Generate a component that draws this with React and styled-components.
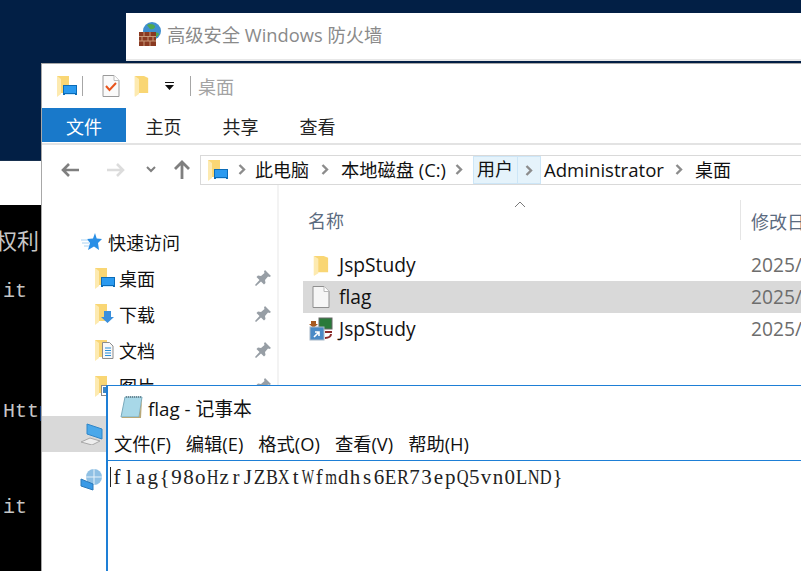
import React from "react";
import styled, { createGlobalStyle } from "styled-components";

const UI_FONT = `"Open Sans", "Noto Sans CJK SC", sans-serif`;

const Global = createGlobalStyle`
  html, body {
    margin: 0;
    padding: 0;
    background: #fff;
    overflow: hidden;
  }
`;

const Desktop = styled.div`
  position: relative;
  width: 801px;
  height: 571px;
  overflow: hidden;
  background: #021f45;
  font-family: ${UI_FONT};
`;

/* windows on the desktop: their place is the content */
const BackSheet = styled.div`
  position: absolute;
  left: 0;
  top: 160px;
  width: 42px;
  height: 45px;
  background: #fff;
  border-top: 1px solid #17304f;
  box-sizing: border-box;
`;

const Terminal = styled.div`
  position: absolute;
  left: 0;
  top: 205px;
  width: 42px;
  height: 366px;
  background: #000;
  overflow: hidden;
  padding-top: 27px;
  box-sizing: border-box;
`;

const TermLine = styled.div`
  height: 24px;
  line-height: 24px;
  white-space: pre;
  color: #c6c6c6;
  font-family: "Liberation Mono", "Noto Sans CJK SC", monospace;
  font-size: ${(p) => p.$size || 20}px;
  margin-left: ${(p) => p.$shift || 0}px;
`;

const FirewallWindow = styled.div`
  position: absolute;
  left: 126px;
  top: 13px;
  width: 675px;
  height: 48px;
  background: #fff;
  box-sizing: border-box;
  border-bottom: 2px solid #e8e8e8;
  display: flex;
  align-items: flex-start;
  padding: 9px 0 0 12px;
  gap: 5px;
`;

const FirewallTitle = styled.div`
  font-size: 18.3px;
  line-height: 25px;
  color: #8a8a8a;
`;

const ExplorerWindow = styled.div`
  position: absolute;
  left: 41px;
  top: 63px;
  width: 760px;
  height: 508px;
  background: #fff;
  box-sizing: border-box;
  border-left: 1px solid #a8a8a8;
  border-top: 1px solid #a8a8a8;
  display: flex;
  flex-direction: column;
`;

const QuickBar = styled.div`
  height: 44px;
  display: flex;
  align-items: center;
  padding-left: 14px;
  flex: none;
`;

const BarSep = styled.div`
  width: 1px;
  height: 20px;
  background: #a6a6a6;
  margin: ${(p) => p.$margin};
`;

const Spacer = styled.span`
  flex: none;
  width: ${(p) => p.$w}px;
`;

const ExplorerTitle = styled.div`
  font-size: 18px;
  color: #a3a3a3;
  margin-left: 7px;
`;

const Ribbon = styled.div`
  height: 37px;
  flex: none;
  display: flex;
  border-bottom: 2px solid #e3e3e3;
  box-sizing: border-box;
`;

const RibbonTab = styled.div`
  height: 34px;
  line-height: 38px;
  font-size: 18px;
  box-sizing: border-box;
  width: ${(p) => (p.$file ? "84px" : "77px")};
  text-align: center;
  margin-right: ${(p) => (p.$file ? "-1px" : "0")};
  color: ${(p) => (p.$file ? "#fff" : "#222")};
  background: ${(p) => (p.$file ? "#1979ca" : "transparent")};
`;

const NavRow = styled.div`
  height: 40px;
  flex: none;
  display: flex;
  align-items: center;
  padding-top: 9px;
  box-sizing: border-box;
`;

const NavButtons = styled.div`
  width: 158px;
  flex: none;
  display: flex;
  align-items: center;
  padding-left: 18px;
  box-sizing: border-box;
`;

const AddressBar = styled.div`
  flex: 1;
  height: 30px;
  display: flex;
  align-items: center;
  box-sizing: border-box;
  border: 1px solid #d9d9d9;
  border-right: none;
  padding-left: 6px;
  font-size: 18px;
  color: #111;
  white-space: nowrap;
`;

const Crumb = styled.span`
  line-height: 28px;
  font-size: ${(p) => p.$size || 18}px;
`;

const CrumbArrow = styled.span`
  display: flex;
  align-items: center;
  justify-content: center;
  width: ${(p) => p.$w}px;
  height: 28px;
`;

const CrumbHot = styled.div`
  display: flex;
  height: 28px;
  background: #e5f3fb;
  border: 1px solid #cde6f7;
  box-sizing: border-box;
  margin-right: 3px;
`;

const HotLabel = styled.span`
  line-height: 25px;
  padding: 0 3px;
  width: 44px;
  box-sizing: border-box;
  border-right: 1px solid #cde6f7;
`;

const Body = styled.div`
  flex: 1;
  display: flex;
  min-height: 0;
`;

const Sidebar = styled.div`
  width: 237px;
  flex: none;
  box-sizing: border-box;
  border-right: 2px solid #f3f3f3;
  padding-top: 39px;
  overflow: hidden;
`;

const SideRow = styled.div`
  height: 36px;
  display: flex;
  align-items: center;
  box-sizing: border-box;
  padding-left: ${(p) => p.$indent}px;
  padding-right: 6px;
  font-size: 18px;
  color: #111;
  background: ${(p) => (p.$selected ? "#d9d9d9" : "transparent")};
`;

const SideGap = styled.div`
  height: ${(p) => p.$h}px;
`;

const SideLabel = styled.span`
  margin-left: ${(p) => p.$ml}px;
  flex: 1;
`;

const FileList = styled.div`
  flex: 1;
  padding: 15px 0 0 24px;
  overflow: hidden;
`;

const HeaderRow = styled.div`
  position: relative;
  height: 40px;
  display: flex;
  align-items: center;
  font-size: 18px;
  color: #5b6b80;
  white-space: nowrap;
  box-sizing: border-box;
`;

const SortCaret = styled.svg`
  position: absolute;
  left: 211px;
  top: 1px;
`;

const NameHead = styled.div`
  width: 438px;
  padding-left: 5px;
  box-sizing: border-box;
  border-right: 1px solid #e5e5e5;
  height: 40px;
  line-height: 43px;
  flex: none;
`;

const DateHead = styled.div`
  padding: 2px 0 0 10px;
`;

const Rows = styled.div`
  padding-top: 9px;
`;

const FileRow = styled.div`
  height: 32px;
  display: flex;
  align-items: center;
  font-size: 19.2px;
  line-height: 30px;
  color: #111;
  white-space: nowrap;
  background: ${(p) => (p.$selected ? "#d9d9d9" : "transparent")};
`;

const FileIconCell = styled.div`
  width: 36px;
  flex: none;
  display: flex;
  justify-content: center;
`;

const FileName = styled.div`
  width: 412px;
  flex: none;
`;

const FileDate = styled.div`
  color: #6d6d6d;
`;

const NotepadWindow = styled.div`
  position: absolute;
  left: 106px;
  top: 385px;
  width: 695px;
  height: 186px;
  background: #fff;
  box-sizing: border-box;
  border-left: 2px solid #1e7fd6;
  border-top: 1px solid #1e7fd6;
  display: flex;
  flex-direction: column;
`;

const NoteTitleBar = styled.div`
  height: 43px;
  flex: none;
  display: flex;
  align-items: center;
  padding-left: 11px;
  gap: 5px;
  font-size: 18.8px;
  color: #111;
`;

const MenuBar = styled.div`
  height: 31px;
  flex: none;
  display: flex;
  align-items: flex-start;
  padding-left: 6px;
  gap: 15px;
  font-size: 18.3px;
  line-height: 30px;
  color: #111;
  white-space: nowrap;
`;

const Editor = styled.div`
  flex: 1;
  border-top: 1px solid #1e7fd6;
  display: flex;
  padding: 1px 0 0 2px;
  align-items: flex-start;
`;

const Caret = styled.div`
  width: 1px;
  height: 20px;
  margin-top: 5px;
  background: #222;
  flex: none;
`;

const NoteText = styled.div`
  display: flex;
  font-family: "Liberation Serif", serif;
  font-size: 21px;
  line-height: 30px;
  color: #222;
`;

const CharCell = styled.span`
  display: flex;
  justify-content: center;
  width: 11.92px;
  flex: none;
`;

const Glyph = styled.span`
  display: inline-block;
  flex: none;
  transform: scaleX(${(p) => p.$scale});
`;

const Folder = ({ w = 18, h = 22 }) => (
  <svg width={w} height={h} viewBox="0 0 18 22" preserveAspectRatio="none">
    <path d="M1 1h11l5 2v15H5l-4 3z" fill="#f9d674" />
    <path d="M1 1l5 3v15l-5 3z" fill="#fdeab0" />
  </svg>
);

const DesktopFolder = () => (
  <svg width="21" height="22" viewBox="0 0 21 22">
    <path d="M1 1h12v17H1z" fill="#f9d674" />
    <path d="M1 1l4 3v15l-4 3z" fill="#fdeab0" />
    <rect x="7" y="10" width="14" height="10" fill="#0b6cb8" />
    <rect x="8" y="11" width="12" height="7" fill="#2a9af0" />
    <rect x="9" y="19" width="10" height="1" fill="#cfe9fb" />
  </svg>
);

const DownloadFolder = () => (
  <svg width="21" height="22" viewBox="0 0 21 22">
    <path d="M1 1h12v17H1z" fill="#f9d674" />
    <path d="M1 1l4 3v15l-4 3z" fill="#fdeab0" />
    <path d="M10 8h7v6h3l-6.500 6L7 14h3z" fill="#3a8fdc" />
  </svg>
);

const DocsFolder = () => (
  <svg width="21" height="22" viewBox="0 0 21 22">
    <path d="M1 1h12v17H1z" fill="#f9d674" />
    <path d="M1 1l4 3v15l-4 3z" fill="#fdeab0" />
    <path d="M8.500 3.500h7l3.500 3.500v12.500H8.500z" fill="#f8f8f8" stroke="#8c8c8c" />
    <path d="M11 9h6M11 11.500h6M11 14h6M11 16.500h6" stroke="#2a8fd8" />
  </svg>
);

const PicturesFolder = () => (
  <svg width="21" height="22" viewBox="0 0 21 22">
    <path d="M1 1h12v17H1z" fill="#f9d674" />
    <path d="M1 1l4 3v15l-4 3z" fill="#fdeab0" />
    <rect x="7.500" y="10.500" width="12" height="10" fill="#fff" stroke="#8a8a8a" />
    <rect x="9" y="12" width="9" height="6" fill="#3d86c6" />
  </svg>
);

const CheckDoc = () => (
  <svg width="18" height="22" viewBox="0 0 18 22">
    <path d="M1 .5h11l5 5v16H1z" fill="#fafafa" stroke="#9a9a9a" />
    <path d="M12 .5v5h5" fill="#fff" stroke="#bcbcbc" />
    <path d="M4 11l3.500 4L14 8" fill="none" stroke="#e8541c" strokeWidth="2" />
  </svg>
);

const DropArrow = styled.svg`
  margin-left: 16px;
`;

const BackArrow = ({ color }) => (
  <svg width="20" height="16" viewBox="0 0 20 16">
    <path d="M19 8H3M9 2L3 8l6 6" fill="none" stroke={color} strokeWidth="2.600" />
  </svg>
);

const ForwardArrow = ({ color }) => (
  <svg width="20" height="16" viewBox="0 0 20 16">
    <path d="M1 8h16M11 2l6 6-6 6" fill="none" stroke={color} strokeWidth="2.600" />
  </svg>
);

const DownChevron = () => (
  <svg width="10" height="7" viewBox="0 0 10 7">
    <path d="M1 1l4 4 4-4" fill="none" stroke="#7f7f7f" strokeWidth="2" />
  </svg>
);

const UpArrow = () => (
  <svg width="18" height="19" viewBox="0 0 18 19">
    <path d="M9 19V3M2 9l7-7 7 7" fill="none" stroke="#7f7f7f" strokeWidth="2.800" />
  </svg>
);

const Chevron = () => (
  <svg width="8" height="11" viewBox="0 0 8 11">
    <path d="M1.500 1l4.500 4.500L1.500 10" fill="none" stroke="#8c8c8c" strokeWidth="2.400" />
  </svg>
);

const StarIcon = () => (
  <svg width="21" height="20" viewBox="0 0 21 20">
    <path d="M14 1l1.700 5.500 5.300.5-4 4 1 7-5-3.500L7 18l2-7-3-4 6-.5z" fill="#2a8fe6" />
    <path d="M0 8h7M1 11h7M3 14h5" stroke="#a9d2f3" />
  </svg>
);

const PinIcon = () => (
  <svg width="16" height="16" viewBox="0 0 16 16">
    <path d="M10 0l6 6-1.500 1L13 6.500 10 10l.5 3-1.500 1.500-3-3L1 16l-1-1 4.500-5-3-3L3 5.500l3 .5 3.500-3L9 1.500z" fill="#979ea5" />
  </svg>
);

const PcIcon = () => (
  <svg width="23" height="22" viewBox="0 0 23 22">
    <path d="M7 1l15 5v10L7 11z" fill="#4aa8ea" stroke="#2f86c8" />
    <path d="M1 19l9-4 10 3-8 4z" fill="#eee" stroke="#a8a8a8" />
  </svg>
);

const NetworkIcon = () => (
  <svg width="23" height="22" viewBox="0 0 23 22">
    <circle cx="14" cy="8" r="8" fill="#8fc0e4" />
    <path d="M14 0v16M6 8h16" fill="none" stroke="#e6f2fa" />
    <path d="M1 10l12 5v6L1 17z" fill="#3a9ae6" stroke="#2a78b8" />
  </svg>
);

const BlankDoc = () => (
  <svg width="18" height="22" viewBox="0 0 18 22">
    <path d="M1 .5h11l5 5v16H1z" fill="#f6f6f6" stroke="#8f8f8f" />
    <path d="M12 .5v5h5" fill="#fff" stroke="#b8b8b8" />
  </svg>
);

const JspIcon = () => (
  <svg width="24" height="24" viewBox="0 0 24 24">
    <rect x="10" y="1" width="13" height="11" fill="#2a7a3a" stroke="#666" />
    <path d="M2 4h5v3h2l-4.500 4L0 7h2z" fill="#a85a20" />
    <rect x="1" y="10" width="14" height="13" fill="#4a8ac6" stroke="#a8b8c8" />
    <path d="M5 20l5-5M6 15h4v4" fill="none" stroke="#fff" strokeWidth="1.600" />
    <path d="M16 15h7M16 21c4 0 6-2 6-4" fill="none" stroke="#8a2a2a" strokeWidth="2" />
  </svg>
);

const NotepadIcon = () => (
  <svg width="24" height="25" viewBox="0 0 24 25">
    <path d="M6 2h17l-3 20H2z" fill="#a8d8e8" stroke="#7aaabc" />
    <path d="M3 22h17l3-18-1 19H3z" fill="#b8a878" />
    <path d="M7 2h15" stroke="#6d8a96" strokeWidth="2" strokeDasharray="1 1" />
  </svg>
);

const FirewallIcon = () => (
  <svg width="24" height="24" viewBox="0 0 24 24">
    <circle cx="14" cy="9" r="9" fill="#3f8fd0" />
    <path d="M9 3c3-2 7-1 8 1s-3 4-5 3zM16 11c2-1 5 0 5 1s-3 4-4 3z" fill="#4fa84f" />
    <rect x="1" y="10" width="17" height="14" fill="#8a3a22" />
    <path d="M1 14.500h17M1 19h17M6 10v4.500M12 10v4.500M4 14.500V19M10 14.500V19M15 14.500V19M6 19v5M12 19v5" stroke="#c89878" />
  </svg>
);

const quickItems = [
  { label: "桌面", icon: <DesktopFolder /> },
  { label: "下载", icon: <DownloadFolder /> },
  { label: "文档", icon: <DocsFolder /> },
  { label: "图片", icon: <PicturesFolder /> },
];

const terminalLines = [
  { text: "权利", shift: -5, size: 22 },
  { text: "" },
  { text: " it -", shift: -9 },
  { text: "" },
  { text: "" },
  { text: "" },
  { text: "" },
  { text: "Http", shift: 3 },
  { text: "" },
  { text: "" },
  { text: "" },
  { text: " it -", shift: -9 },
];

const files = [
  { name: "JspStudy", icon: <Folder w={16} h={21} /> },
  { name: "flag", icon: <BlankDoc />, selected: true },
  { name: "JspStudy", icon: <JspIcon /> },
];

// the notepad font is fixed-pitch, so wide serif capitals get squeezed into the cell
const glyphScale = { W: 0.62, m: 0.72, H: 0.78, X: 0.78, Q: 0.78, N: 0.78, D: 0.78, B: 0.85, R: 0.85, Z: 0.9, E: 0.9, L: 0.9 };
const FLAG = "flag{98oHzrJZBXtWfmdhs6ER73epQ5vn0LND}";

const App = () => {
  return (
    <Desktop>
      <Global />
      <BackSheet />
      <Terminal>
        {terminalLines.map((l, i) => (
          <TermLine key={i} $shift={l.shift} $size={l.size}>
            {l.text}
          </TermLine>
        ))}
      </Terminal>

      <FirewallWindow>
        <FirewallIcon />
        <FirewallTitle>高级安全 Windows 防火墙</FirewallTitle>
      </FirewallWindow>

      <ExplorerWindow>
        <QuickBar>
          <DesktopFolder />
          <BarSep $margin="0 19px 0 5px" />
          <CheckDoc />
          <Spacer $w={14} />
          <Folder w={15} h={22} />
          <DropArrow width="9" height="8" viewBox="0 0 9 8">
            <path d="M0 0h9v1H0zM0 3h9L4.500 8z" fill="#111" />
          </DropArrow>
          <BarSep $margin="0 0 0 16px" />
          <ExplorerTitle>桌面</ExplorerTitle>
        </QuickBar>
        <Ribbon>
          <RibbonTab $file>文件</RibbonTab>
          <RibbonTab>主页</RibbonTab>
          <RibbonTab>共享</RibbonTab>
          <RibbonTab>查看</RibbonTab>
        </Ribbon>
        <NavRow>
          <NavButtons>
            <BackArrow color="#7f7f7f" />
            <Spacer $w={26} />
            <ForwardArrow color="#dcdcdc" />
            <Spacer $w={20} />
            <DownChevron />
            <Spacer $w={17} />
            <UpArrow />
          </NavButtons>
          <AddressBar>
            <DesktopFolder />
            <CrumbArrow $w={27}>
              <Chevron />
            </CrumbArrow>
            <Crumb>此电脑</Crumb>
            <CrumbArrow $w={32}>
              <Chevron />
            </CrumbArrow>
            <Crumb $size={18.3}>本地磁盘 (C:)</Crumb>
            <CrumbArrow $w={27}>
              <Chevron />
            </CrumbArrow>
            <CrumbHot>
              <HotLabel>用户</HotLabel>
              <CrumbArrow $w={22}>
                <Chevron />
              </CrumbArrow>
            </CrumbHot>
            <Crumb $size={18.6}>Administrator</Crumb>
            <CrumbArrow $w={31}>
              <Chevron />
            </CrumbArrow>
            <Crumb>桌面</Crumb>
          </AddressBar>
        </NavRow>
        <Body>
          <Sidebar>
            <SideRow $indent={39}>
              <StarIcon />
              <SideLabel $ml={6}>快速访问</SideLabel>
            </SideRow>
            {quickItems.map((item) => (
              <SideRow key={item.label} $indent={52}>
                {item.icon}
                <SideLabel $ml={4}>{item.label}</SideLabel>
                <PinIcon />
              </SideRow>
            ))}
            <SideGap $h={12} />
            <SideRow $indent={38} $selected>
              <PcIcon />
            </SideRow>
            <SideGap $h={10} />
            <SideRow $indent={38}>
              <NetworkIcon />
            </SideRow>
          </Sidebar>
          <FileList>
            <HeaderRow>
              <SortCaret width="12" height="6" viewBox="0 0 12 6">
                <path d="M1 6l5-5 5 5" fill="none" stroke="#7a7a7a" />
              </SortCaret>
              <NameHead>名称</NameHead>
              <DateHead>修改日期</DateHead>
            </HeaderRow>
            <Rows>
              {files.map((f, i) => (
                <FileRow key={i} $selected={f.selected}>
                  <FileIconCell>{f.icon}</FileIconCell>
                  <FileName>{f.name}</FileName>
                  <FileDate>2025/10/10</FileDate>
                </FileRow>
              ))}
            </Rows>
          </FileList>
        </Body>
      </ExplorerWindow>

      <NotepadWindow>
        <NoteTitleBar>
          <NotepadIcon />
          <span>flag - 记事本</span>
        </NoteTitleBar>
        <MenuBar>
          <span>文件(F)</span>
          <span>编辑(E)</span>
          <span>格式(O)</span>
          <span>查看(V)</span>
          <span>帮助(H)</span>
        </MenuBar>
        <Editor>
          <Caret />
          <NoteText>
            {FLAG.split("").map((c, i) => (
              <CharCell key={i}>
                <Glyph $scale={glyphScale[c] || 1}>{c}</Glyph>
              </CharCell>
            ))}
          </NoteText>
        </Editor>
      </NotepadWindow>
    </Desktop>
  );
};

export default App;
